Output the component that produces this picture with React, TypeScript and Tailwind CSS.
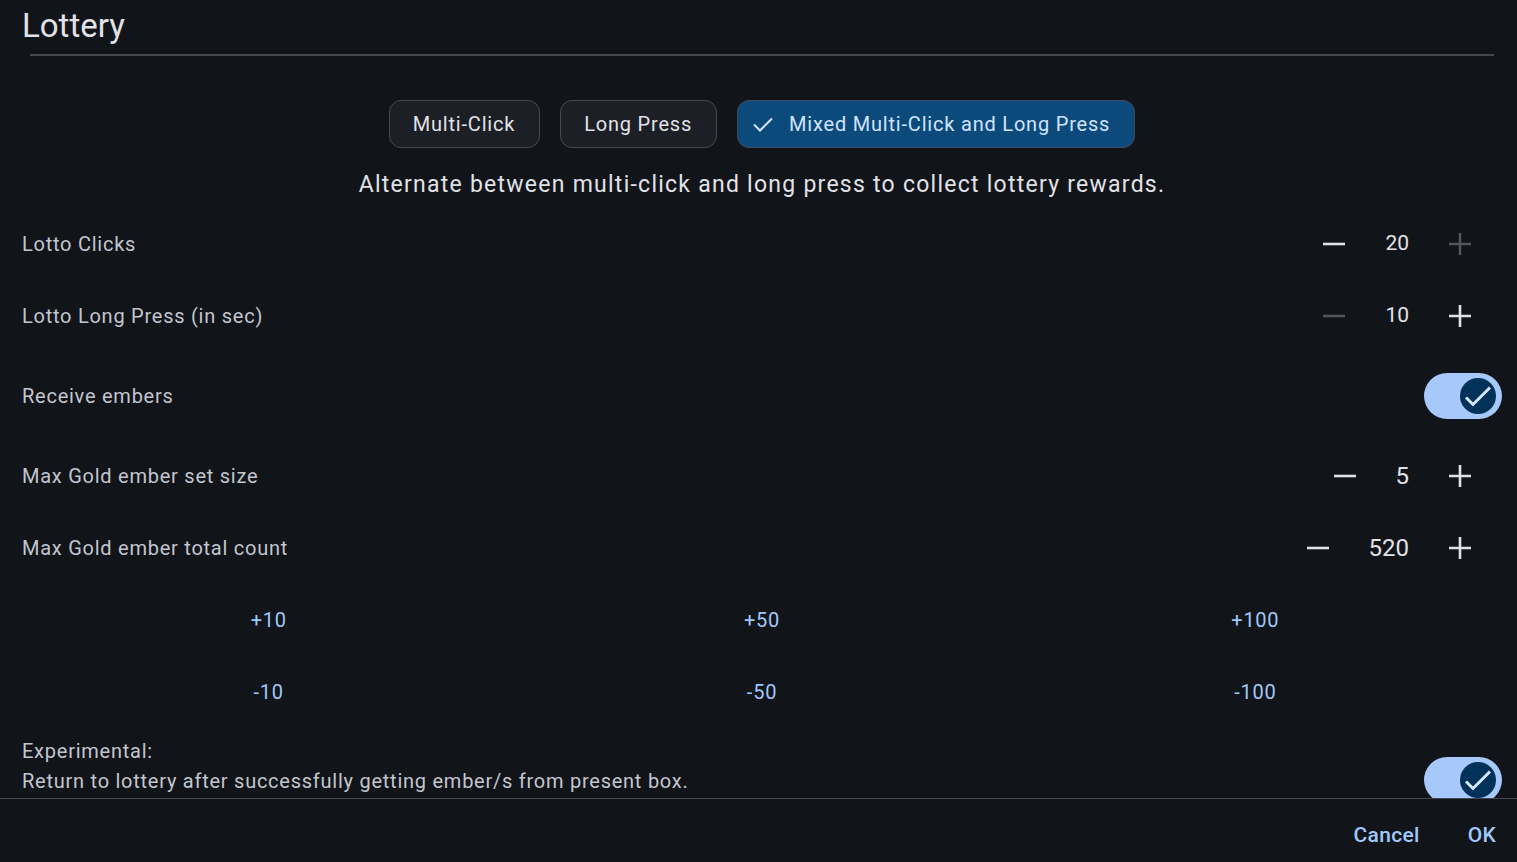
import { useState } from "react";

const MODES = ["Multi-Click", "Long Press", "Mixed Multi-Click and Long Press"];

function MinusIcon({ disabled }: { disabled?: boolean }) {
  return (
    <svg width="24" height="24" viewBox="0 0 24 24" className={disabled ? "text-[#52555b]" : "text-[#e1e2e8]"}>
      <path d="M1 12h22" stroke="currentColor" strokeWidth="2.6" />
    </svg>
  );
}

function PlusIcon({ disabled }: { disabled?: boolean }) {
  return (
    <svg width="24" height="24" viewBox="0 0 24 24" className={disabled ? "text-[#52555b]" : "text-[#e1e2e8]"}>
      <path d="M1 12h22M12 1v22" stroke="currentColor" strokeWidth="2.6" />
    </svg>
  );
}

function Stepper({ value, big, minusOff, plusOff }: {
  value: number; big?: boolean; minusOff?: boolean; plusOff?: boolean;
}) {
  return (
    <div className="flex items-center mr-[18px] mt-[1px]">
      <button className="w-12 h-12 flex items-center justify-center"><MinusIcon disabled={minusOff} /></button>
      <span className={`px-[27px] text-[#e1e2e8] ${big ? "text-[24px]" : "text-[21px]"}`}>{value}</span>
      <button className="w-12 h-12 flex items-center justify-center"><PlusIcon disabled={plusOff} /></button>
    </div>
  );
}

function Toggle({ on }: { on: boolean }) {
  return (
    <div className="w-[78px] h-[46px] rounded-full bg-[#a6c8fb] flex items-center justify-end pr-[6px] shrink-0">
      <div className="w-[36px] h-[36px] rounded-full bg-[#003259] flex items-center justify-center">
        {on && (
          <svg width="28" height="22" viewBox="0 0 28 22">
            <path d="M2 12.5l7 7L26 2.5" fill="none" stroke="#d6e6ff" strokeWidth="3" />
          </svg>
        )}
      </div>
    </div>
  );
}

function Row({ label, children, h = "h-[72px]" }: { label: string; children: React.ReactNode; h?: string }) {
  return (
    <div className={`flex items-center justify-between ${h}`}>
      <span className="text-[20px] tracking-[0.75px] text-[#c3c6cf]">{label}</span>
      {children}
    </div>
  );
}

export default function App() {
  const [mode, setMode] = useState(2);

  return (
    <div className="h-[862px] w-full bg-[#111418] flex flex-col overflow-hidden" style={{ fontFamily: "Roboto, 'Noto Sans', sans-serif" }}>
      {/* Header */}
      <div className="shrink-0">
        <h1 className="pl-[22px] pt-[6px] text-[33px] leading-[40px] text-[#e1e2e8]">Lottery</h1>
        <div className="ml-[30px] mr-[23px] mt-[8px] h-[1.5px] bg-[#44474e]" />
      </div>

      {/* Content */}
      <div className="flex-1 overflow-hidden pl-[22px] pr-[15px]">
        <div className="flex justify-center gap-[20px] mt-[44px]">
          {MODES.map((m, i) => (
            <button
              key={m}
              onClick={() => setMode(i)}
              className={`h-[48px] pr-[24px] rounded-[12px] border-[1.5px] flex items-center gap-[14px] text-[20px] tracking-[0.8px] ${
                i === mode ? "bg-[#0c4a7c] border-[#3e4a5a] text-[#d1e4ff] pl-[13px]" : "bg-[#1c1f25] border-[#464950] text-[#e1e2e8] pl-[23px]"
              }`}
            >
              {i === mode && (
                <svg width="24" height="24" viewBox="0 0 24 24">
                  <path d="M3 12.5l6 6L21 6.5" fill="none" stroke="#d1e4ff" strokeWidth="2" />
                </svg>
              )}
              {m}
            </button>
          ))}
        </div>
        <p className="text-center text-[23px] leading-[32px] tracking-[1.25px] text-[#e1e2e8] mt-[21px] mb-[7px]">
          Alternate between multi-click and long press to collect lottery rewards.
        </p>

        <Row label="Lotto Clicks"><Stepper value={20} plusOff /></Row>
        <Row label="Lotto Long Press (in sec)"><Stepper value={10} minusOff /></Row>
        <Row label="Receive embers" h="h-[88px]"><Toggle on /></Row>
        <Row label="Max Gold ember set size"><Stepper value={5} big /></Row>
        <Row label="Max Gold ember total count"><Stepper value={520} big /></Row>

        <div className="grid grid-cols-3">
          {["+10", "+50", "+100"].map((t) => (
            <button key={t} className="h-[72px] text-[20px] tracking-[0.75px] text-[#a0c9fb]">{t}</button>
          ))}
          {["-10", "-50", "-100"].map((t) => (
            <button key={t} className="h-[72px] text-[20px] tracking-[0.75px] text-[#a0c9fb]">{t}</button>
          ))}
        </div>

        <div className="flex items-start justify-between mt-[8px]">
          <div className="text-[20px] leading-[30px] tracking-[0.75px] text-[#c3c6cf]">
            <p>Experimental:</p>
            <p>Return to lottery after successfully getting ember/s from present box.</p>
          </div>
          <div className="mt-[21px]"><Toggle on /></div>
        </div>
      </div>

      {/* Footer */}
      <div className="shrink-0 h-[64px] border-t-[1.5px] border-[#44474e] flex items-center justify-end gap-[48px] pr-[21px]">
        <button className="text-[21px] font-medium tracking-[0.3px] text-[#a0c9fb] mt-[11px]">Cancel</button>
        <button className="text-[21px] font-medium tracking-[0.3px] text-[#a0c9fb] mt-[11px]">OK</button>
      </div>
    </div>
  );
}
